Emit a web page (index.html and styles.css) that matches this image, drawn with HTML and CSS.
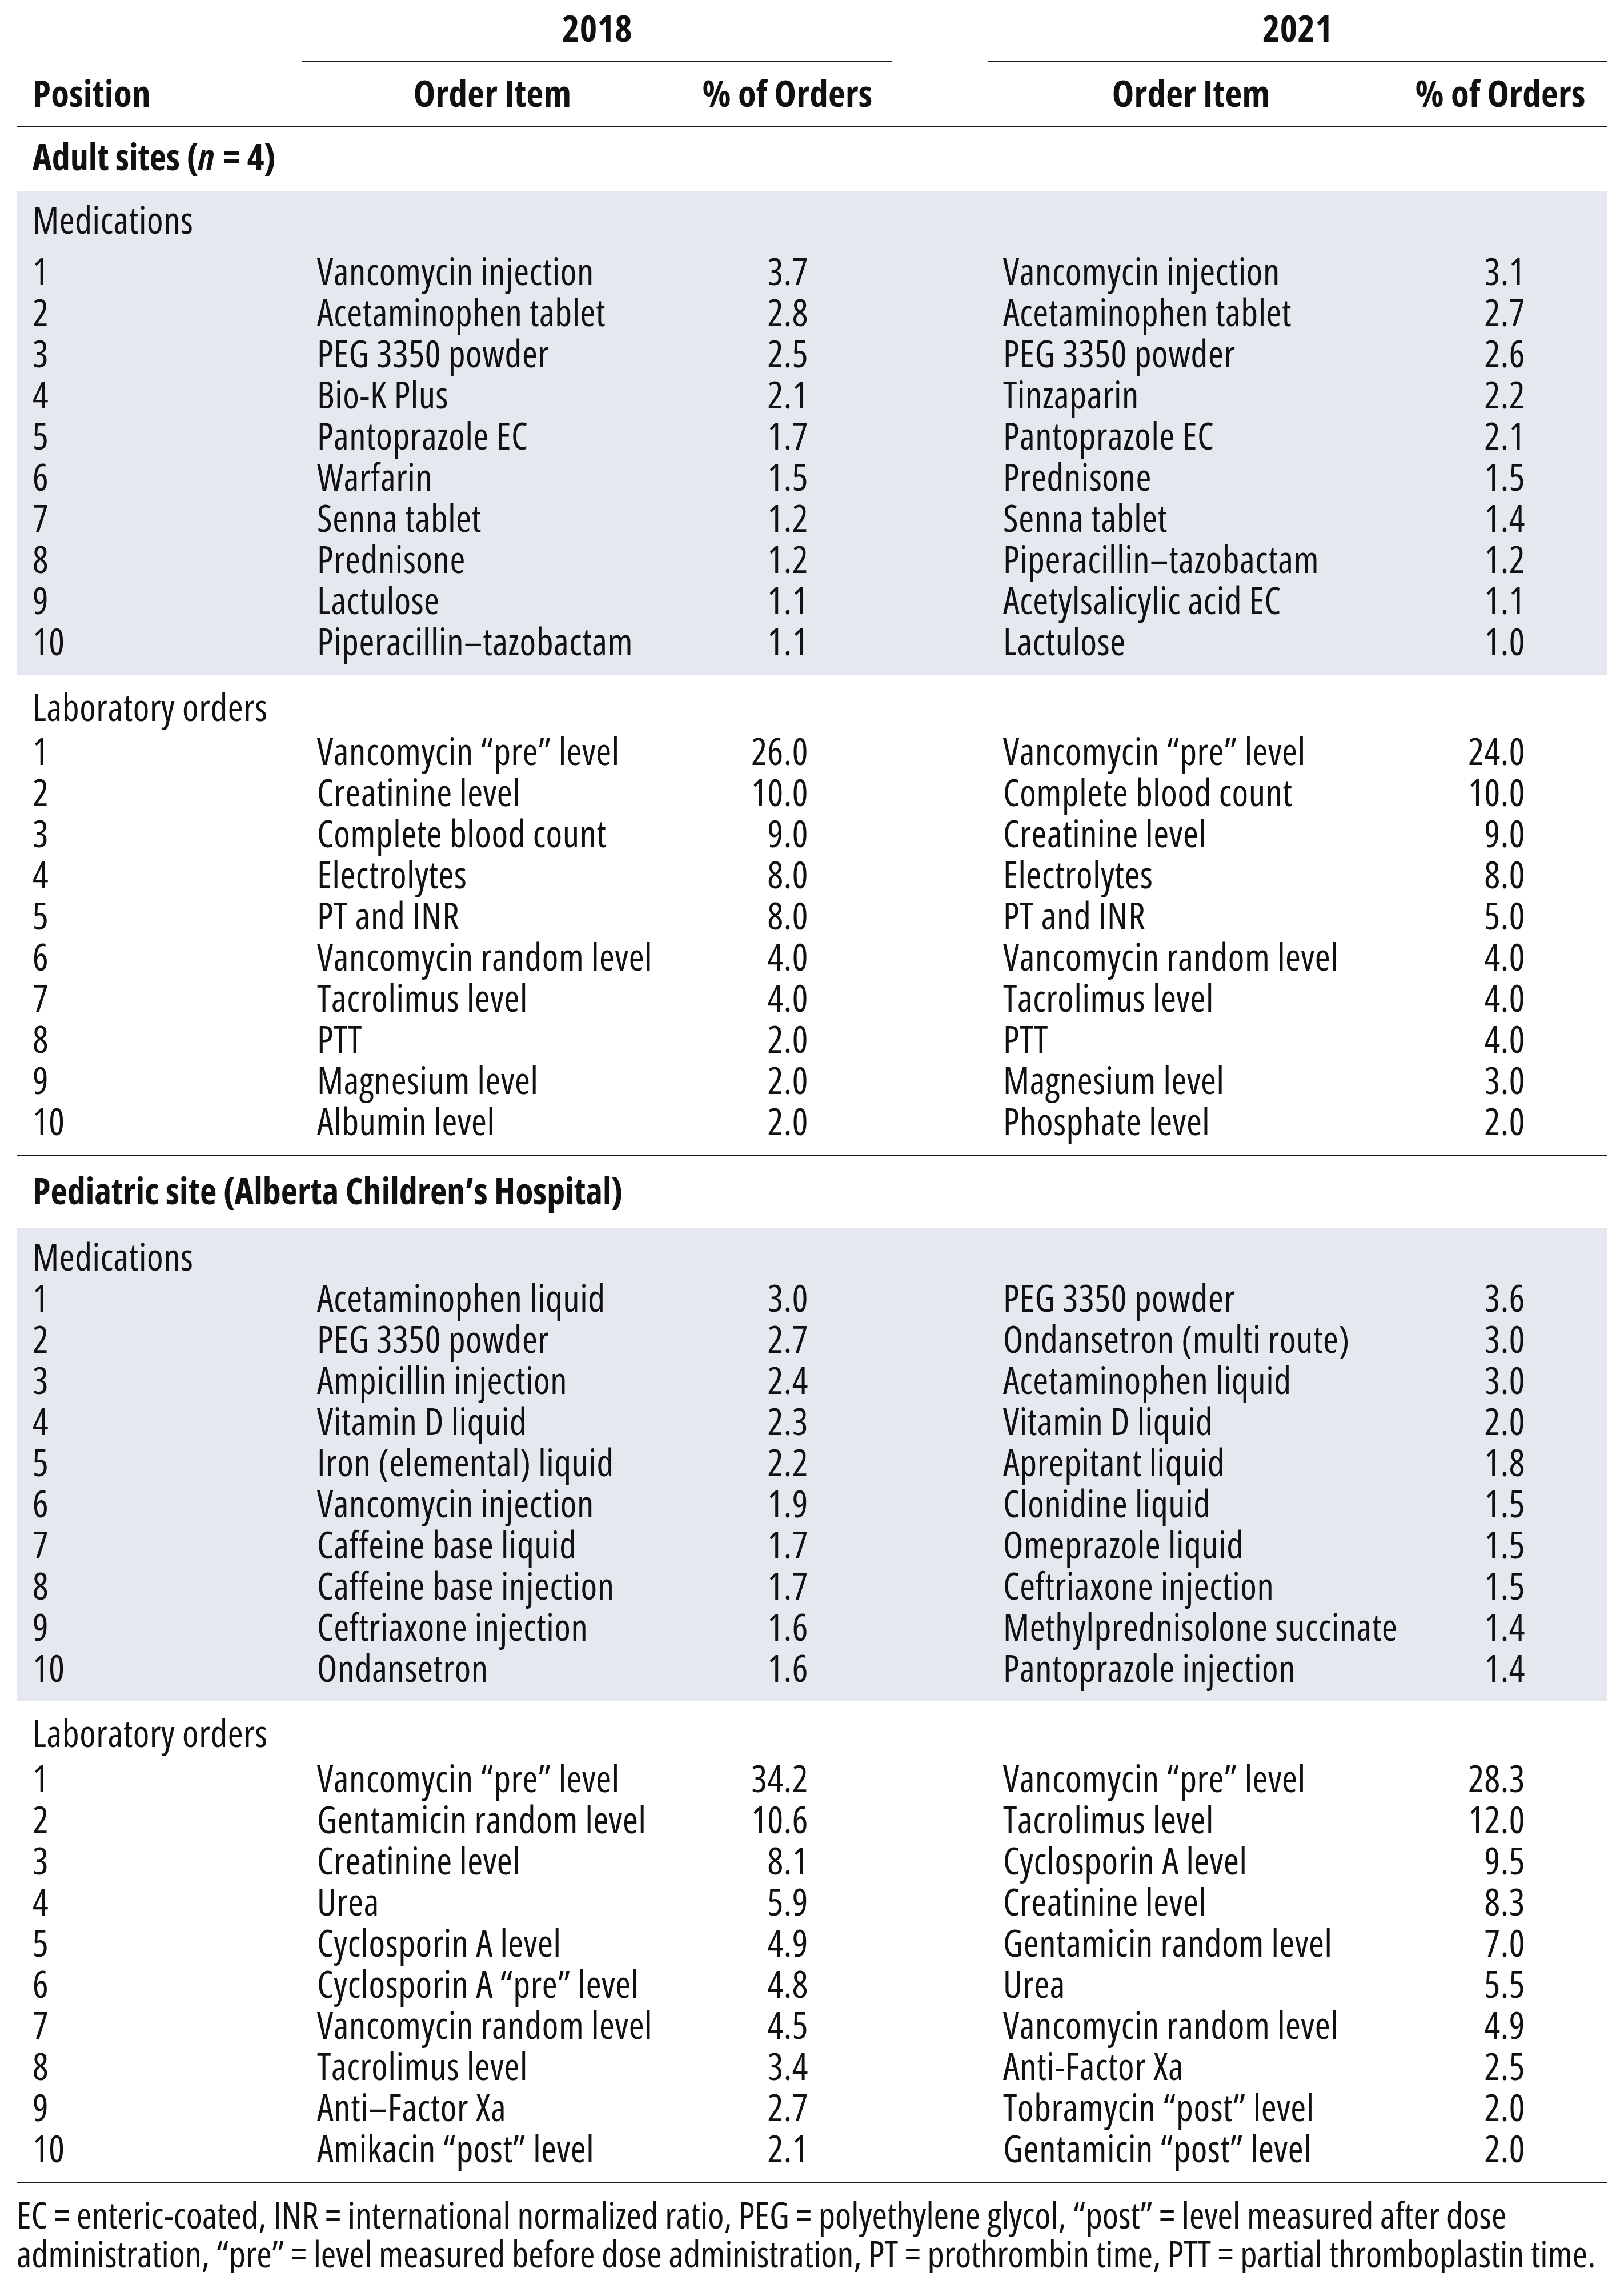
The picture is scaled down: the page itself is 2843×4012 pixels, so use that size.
FILE: index.html
```html
<!DOCTYPE html>
<html lang="en">
<head>
<meta charset="utf-8">
<title>Top order items, 2018 and 2021</title>
<link rel="stylesheet" href="styles.css">
</head>
<body>
<main class="page">
<table class="orders">
  <colgroup>
    <col class="c-pos"><col class="c-item18"><col class="c-pct18"><col class="c-gap"><col class="c-item21"><col class="c-pct21">
  </colgroup>
  <thead>
    <tr class="year">
      <th></th>
      <th colspan="2" class="span">2018</th>
      <th></th>
      <th colspan="2" class="span">2021</th>
    </tr>
    <tr class="head">
      <th class="pos">Position</th>
      <th class="ctr">Order Item</th>
      <th class="ctr">% of Orders</th>
      <th></th>
      <th class="ctr">Order Item</th>
      <th class="ctr">% of Orders</th>
    </tr>
  </thead>

  <tbody>
    <tr class="site"><td colspan="6" class="pos">Adult sites (<i>n</i> = 4)</td></tr>
  </tbody>

  <tbody class="band band-a">
    <tr class="group"><td colspan="6" class="pos">Medications</td></tr>
    <tr><td class="pos">1</td><td class="item">Vancomycin injection</td><td class="num">3.7</td><td></td><td class="item">Vancomycin injection</td><td class="num n21">3.1</td></tr>
    <tr><td class="pos">2</td><td class="item">Acetaminophen tablet</td><td class="num">2.8</td><td></td><td class="item">Acetaminophen tablet</td><td class="num n21">2.7</td></tr>
    <tr><td class="pos">3</td><td class="item">PEG 3350 powder</td><td class="num">2.5</td><td></td><td class="item">PEG 3350 powder</td><td class="num n21">2.6</td></tr>
    <tr><td class="pos">4</td><td class="item">Bio-K Plus</td><td class="num">2.1</td><td></td><td class="item">Tinzaparin</td><td class="num n21">2.2</td></tr>
    <tr><td class="pos">5</td><td class="item">Pantoprazole EC</td><td class="num">1.7</td><td></td><td class="item">Pantoprazole EC</td><td class="num n21">2.1</td></tr>
    <tr><td class="pos">6</td><td class="item">Warfarin</td><td class="num">1.5</td><td></td><td class="item">Prednisone</td><td class="num n21">1.5</td></tr>
    <tr><td class="pos">7</td><td class="item">Senna tablet</td><td class="num">1.2</td><td></td><td class="item">Senna tablet</td><td class="num n21">1.4</td></tr>
    <tr><td class="pos">8</td><td class="item">Prednisone</td><td class="num">1.2</td><td></td><td class="item">Piperacillin–tazobactam</td><td class="num n21">1.2</td></tr>
    <tr><td class="pos">9</td><td class="item">Lactulose</td><td class="num">1.1</td><td></td><td class="item">Acetylsalicylic acid EC</td><td class="num n21">1.1</td></tr>
    <tr class="last"><td class="pos">10</td><td class="item">Piperacillin–tazobactam</td><td class="num">1.1</td><td></td><td class="item">Lactulose</td><td class="num n21">1.0</td></tr>
  </tbody>

  <tbody class="plain plain-a">
    <tr class="group"><td colspan="6" class="pos">Laboratory orders</td></tr>
    <tr><td class="pos">1</td><td class="item">Vancomycin “pre” level</td><td class="num">26.0</td><td></td><td class="item">Vancomycin “pre” level</td><td class="num n21">24.0</td></tr>
    <tr><td class="pos">2</td><td class="item">Creatinine level</td><td class="num">10.0</td><td></td><td class="item">Complete blood count</td><td class="num n21">10.0</td></tr>
    <tr><td class="pos">3</td><td class="item">Complete blood count</td><td class="num">9.0</td><td></td><td class="item">Creatinine level</td><td class="num n21">9.0</td></tr>
    <tr><td class="pos">4</td><td class="item">Electrolytes</td><td class="num">8.0</td><td></td><td class="item">Electrolytes</td><td class="num n21">8.0</td></tr>
    <tr><td class="pos">5</td><td class="item">PT and INR</td><td class="num">8.0</td><td></td><td class="item">PT and INR</td><td class="num n21">5.0</td></tr>
    <tr><td class="pos">6</td><td class="item">Vancomycin random level</td><td class="num">4.0</td><td></td><td class="item">Vancomycin random level</td><td class="num n21">4.0</td></tr>
    <tr><td class="pos">7</td><td class="item">Tacrolimus level</td><td class="num">4.0</td><td></td><td class="item">Tacrolimus level</td><td class="num n21">4.0</td></tr>
    <tr><td class="pos">8</td><td class="item">PTT</td><td class="num">2.0</td><td></td><td class="item">PTT</td><td class="num n21">4.0</td></tr>
    <tr><td class="pos">9</td><td class="item">Magnesium level</td><td class="num">2.0</td><td></td><td class="item">Magnesium level</td><td class="num n21">3.0</td></tr>
    <tr class="last"><td class="pos">10</td><td class="item">Albumin level</td><td class="num">2.0</td><td></td><td class="item">Phosphate level</td><td class="num n21">2.0</td></tr>
  </tbody>

  <tbody>
    <tr class="site site-b"><td colspan="6" class="pos">Pediatric site (Alberta Children’s Hospital)</td></tr>
  </tbody>

  <tbody class="band band-b">
    <tr class="group"><td colspan="6" class="pos">Medications</td></tr>
    <tr><td class="pos">1</td><td class="item">Acetaminophen liquid</td><td class="num">3.0</td><td></td><td class="item">PEG 3350 powder</td><td class="num n21">3.6</td></tr>
    <tr><td class="pos">2</td><td class="item">PEG 3350 powder</td><td class="num">2.7</td><td></td><td class="item">Ondansetron (multi route)</td><td class="num n21">3.0</td></tr>
    <tr><td class="pos">3</td><td class="item">Ampicillin injection</td><td class="num">2.4</td><td></td><td class="item">Acetaminophen liquid</td><td class="num n21">3.0</td></tr>
    <tr><td class="pos">4</td><td class="item">Vitamin D liquid</td><td class="num">2.3</td><td></td><td class="item">Vitamin D liquid</td><td class="num n21">2.0</td></tr>
    <tr><td class="pos">5</td><td class="item">Iron (elemental) liquid</td><td class="num">2.2</td><td></td><td class="item">Aprepitant liquid</td><td class="num n21">1.8</td></tr>
    <tr><td class="pos">6</td><td class="item">Vancomycin injection</td><td class="num">1.9</td><td></td><td class="item">Clonidine liquid</td><td class="num n21">1.5</td></tr>
    <tr><td class="pos">7</td><td class="item">Caffeine base liquid</td><td class="num">1.7</td><td></td><td class="item">Omeprazole liquid</td><td class="num n21">1.5</td></tr>
    <tr><td class="pos">8</td><td class="item">Caffeine base injection</td><td class="num">1.7</td><td></td><td class="item">Ceftriaxone injection</td><td class="num n21">1.5</td></tr>
    <tr><td class="pos">9</td><td class="item">Ceftriaxone injection</td><td class="num">1.6</td><td></td><td class="item">Methylprednisolone succinate</td><td class="num n21">1.4</td></tr>
    <tr class="last"><td class="pos">10</td><td class="item">Ondansetron</td><td class="num">1.6</td><td></td><td class="item">Pantoprazole injection</td><td class="num n21">1.4</td></tr>
  </tbody>

  <tbody class="plain plain-b">
    <tr class="group"><td colspan="6" class="pos">Laboratory orders</td></tr>
    <tr><td class="pos">1</td><td class="item">Vancomycin “pre” level</td><td class="num">34.2</td><td></td><td class="item">Vancomycin “pre” level</td><td class="num n21">28.3</td></tr>
    <tr><td class="pos">2</td><td class="item">Gentamicin random level</td><td class="num">10.6</td><td></td><td class="item">Tacrolimus level</td><td class="num n21">12.0</td></tr>
    <tr><td class="pos">3</td><td class="item">Creatinine level</td><td class="num">8.1</td><td></td><td class="item">Cyclosporin A level</td><td class="num n21">9.5</td></tr>
    <tr><td class="pos">4</td><td class="item">Urea</td><td class="num">5.9</td><td></td><td class="item">Creatinine level</td><td class="num n21">8.3</td></tr>
    <tr><td class="pos">5</td><td class="item">Cyclosporin A level</td><td class="num">4.9</td><td></td><td class="item">Gentamicin random level</td><td class="num n21">7.0</td></tr>
    <tr><td class="pos">6</td><td class="item">Cyclosporin A “pre” level</td><td class="num">4.8</td><td></td><td class="item">Urea</td><td class="num n21">5.5</td></tr>
    <tr><td class="pos">7</td><td class="item">Vancomycin random level</td><td class="num">4.5</td><td></td><td class="item">Vancomycin random level</td><td class="num n21">4.9</td></tr>
    <tr><td class="pos">8</td><td class="item">Tacrolimus level</td><td class="num">3.4</td><td></td><td class="item">Anti-Factor Xa</td><td class="num n21">2.5</td></tr>
    <tr><td class="pos">9</td><td class="item">Anti–Factor Xa</td><td class="num">2.7</td><td></td><td class="item">Tobramycin “post” level</td><td class="num n21">2.0</td></tr>
    <tr class="last"><td class="pos">10</td><td class="item">Amikacin “post” level</td><td class="num">2.1</td><td></td><td class="item">Gentamicin “post” level</td><td class="num n21">2.0</td></tr>
  </tbody>
</table>

<p class="note"><span class="note-line">EC = enteric-coated, INR = international normalized ratio, PEG = polyethylene glycol, “post” = level measured after dose</span><span class="note-line">administration, “pre” = level measured before dose administration, PT = prothrombin time, PTT = partial thromboplastin time.</span></p>
</main>
</body>
</html>
```
FILE: styles.css
```css
html, body {
  margin: 0;
  padding: 0;
  background: #ffffff;
}

body {
  font-family: "Open Sans", "Noto Sans", sans-serif;
  font-stretch: 75%;
  font-size: 65px;
  letter-spacing: 0.6px;
  line-height: 72px;
  color: #111111;
}

.page {
  padding: 12px 0 0 29px;
  width: 2784px;
}

.orders {
  width: 2784px;
  table-layout: fixed;
  border-collapse: separate;
  border-spacing: 0;
}

.c-pos { width: 500px; }
.c-item18 { width: 666px; }
.c-pct18 { width: 367px; }
.c-gap { width: 168px; }
.c-item21 { width: 710px; }
.c-pct21 { width: 373px; }

.orders th,
.orders td {
  padding: 0;
  white-space: nowrap;
  text-align: left;
  vertical-align: top;
  font-weight: 400;
}

.orders th {
  font-weight: 700;
  letter-spacing: 0.3px;
}

.orders .pos { padding-left: 28px; }
.orders .item { padding-left: 26px; }
.orders .num { text-align: right; padding-right: 147px; }
.orders .num.n21 { padding-right: 143px; }
.orders .ctr { text-align: center; }

/* header rows */
.year th { padding-bottom: 22px; }
.year th.span {
  text-align: center;
  border-bottom: 2px solid #1a1a1a;
}
.head th {
  padding-top: 18px;
  padding-bottom: 22px;
  border-bottom: 2px solid #1a1a1a;
}

/* site headings */
.site td {
  font-weight: 700;
  font-size: 64px;
  letter-spacing: 0;
  padding-top: 16px;
  padding-bottom: 25px;
}
.site td i {
  padding-right: 4px;
}
.site-b td {
  padding-top: 24px;
  padding-bottom: 30px;
}

/* shaded medication bands */
.band td { background: #e5e8ef; }

.band-a .group td { padding-top: 13px; padding-bottom: 18px; }
.band-a .last td { padding-bottom: 24px; }

.band-b .group td { padding-top: 13px; padding-bottom: 0; }
.band-b .last td { padding-bottom: 22px; }

/* laboratory blocks */
.plain-a .group td { padding-top: 19px; padding-bottom: 5px; }
.plain-b .group td { padding-top: 20px; padding-bottom: 7px; }

.plain .last td {
  padding-bottom: 23px;
  border-bottom: 2px solid #1a1a1a;
}
.plain-a .last td { padding-bottom: 24px; }

/* footnote */
.note {
  margin: 22px 0 0 0;
  font-size: 64px;
  letter-spacing: 0;
  line-height: 68px;
  color: #111111;
}
.note-line {
  display: block;
  white-space: nowrap;
}
```
